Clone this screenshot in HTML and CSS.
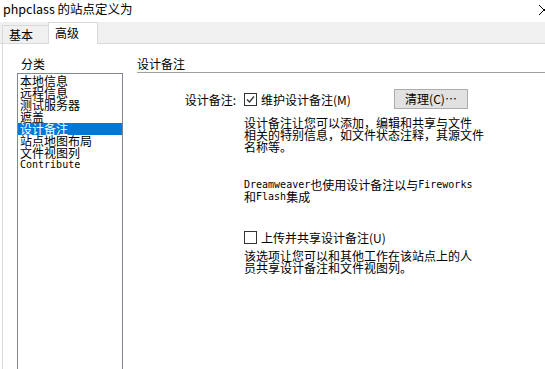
FILE: index.html
```html
<!DOCTYPE html>
<html lang="zh-CN">
<head>
    <meta charset="UTF-8">
    <title>phpclass 的站点定义为</title>
    <link rel="stylesheet" href="styles.css">
</head>
<body>
    <div class="titlebar">
        <span class="title">phpclass 的站点定义为</span>
        <svg class="close" width="12" height="12" viewBox="0 0 12 12">
            <path d="M1 1 L11 11 M11 1 L1 11" stroke="#000" stroke-width="1" fill="none"/>
        </svg>
    </div>

    <div class="tabbar">
        <div class="tab">基本</div>
        <div class="tab active">高级</div>
    </div>

    <div class="panel">
        <div class="side">
            <div class="side-label">分类</div>
            <ul class="listbox">
                <li>本地信息</li>
                <li>远程信息</li>
                <li>测试服务器</li>
                <li>遮盖</li>
                <li class="selected">设计备注</li>
                <li>站点地图布局</li>
                <li>文件视图列</li>
                <li><span class="mono">Contribute</span></li>
            </ul>
        </div>

        <div class="main">
            <div class="section-title">设计备注</div>

            <div class="row first">
                <span class="row-label">设计备注:</span>
                <label class="check">
                    <span class="box">
                        <svg width="11" height="11" viewBox="0 0 11 11">
                            <path d="M2 5.5 L4.5 8 L9 2.5" stroke="#333" stroke-width="1.3" fill="none"/>
                        </svg>
                    </span>
                    维护设计备注(M)
                </label>
                <button class="btn">清理(C)…</button>
            </div>

            <p class="note n1">设计备注让您可以添加，编辑和共享与文件<br>相关的特别信息，如文件状态注释，其源文件<br>名称等。</p>

            <p class="note n2"><span class="mono">Dreamweaver</span>也使用设计备注以与<span class="mono">Fireworks</span><br>和<span class="mono">Flash</span>集成</p>

            <div class="row second">
                <label class="check">
                    <span class="box"></span>
                    上传并共享设计备注(U)
                </label>
            </div>

            <p class="note n3">该选项让您可以和其他工作在该站点上的人<br>员共享设计备注和文件视图列。</p>
        </div>
    </div>
</body>
</html>
```

FILE: styles.css
```css
body {
    margin: 0;
    width: 545px;
    height: 369px;
    overflow: hidden;
    background: #fff;
    color: #000;
    font-family: "Noto Sans CJK SC", "Noto Sans", sans-serif;
    font-size: 12px;
}

.titlebar {
    height: 22px;
    display: flex;
    align-items: center;
    padding-left: 3px;
}

.title {
    font-size: 12.5px;
    line-height: 16px;
    margin-top: -4px;
}

.close {
    margin-left: auto;
    margin-right: -5px;
    margin-top: -3px;
}

.tabbar {
    height: 21px;
    background: #f0f0f0;
    border-bottom: 1px solid #d9d9d9;
    display: flex;
    align-items: flex-end;
    padding-left: 2px;
}

.tab {
    height: 17px;
    line-height: 18px;
    padding: 0 16px 0 6px;
    border: 1px solid #d9d9d9;
    border-bottom: none;
    background: #f0f0f0;
    font-size: 12px;
}

.tab.active {
    height: 21px;
    line-height: 19px;
    margin-bottom: -1px;
    margin-left: -2px;
    padding: 0 18px 0 6px;
    background: #fff;
}

/* panel fills the rest of the window; the list runs off the bottom edge */
.panel {
    display: flex;
    height: 313px;
    margin-left: 2px;
    border-left: 1px solid #d9d9d9;
    padding-top: 12px;
}

.side {
    width: 106px;
    margin-left: 14px;
    display: flex;
    flex-direction: column;
}

.side-label {
    height: 17px;
    line-height: 15px;
    padding-left: 4px;
}

.listbox {
    flex: 1;
    margin: 0;
    padding: 1px 0 0;
    list-style: none;
    border: 1px solid #828790;
    border-bottom: none;
}

.listbox li {
    height: 12px;
    line-height: 12px;
    padding-left: 2px;
    white-space: nowrap;
}

.listbox li.selected {
    background: #0078d7;
    color: #fff;
}

.mono {
    font-family: "DejaVu Sans Mono", "Liberation Mono", monospace;
    font-size: 10px;
    line-height: 12px;
    vertical-align: top;
}

.main {
    flex: 1;
    margin-left: 14px;
}

.section-title {
    height: 16px;
    line-height: 15px;
    border-bottom: 1px solid #a0a0a0;
}

.row {
    display: flex;
    align-items: center;
}

.row.first {
    height: 20px;
    margin-top: 16px;
}

.row.second {
    height: 14px;
    margin-top: 27px;
    padding-left: 107px;
}

.row-label {
    width: 99px;
    text-align: right;
    margin-right: 8px;
}

.check {
    display: flex;
    align-items: center;
    width: 150px;
    white-space: nowrap;
}

.box {
    width: 11px;
    height: 11px;
    border: 1px solid #333;
    background: #fff;
    margin-right: 4px;
    display: flex;
}

.btn {
    width: 74px;
    height: 20px;
    padding: 0;
    border: 1px solid #adadad;
    background: #e1e1e1;
    font-family: inherit;
    font-size: 12px;
    line-height: 16px;
    color: #000;
}

.note {
    margin: 0 0 0 107px;
    line-height: 12px;
    white-space: nowrap;
}

.n1 {
    margin-top: 8px;
}

.n2 {
    margin-top: 26px;
}

.n3 {
    margin-top: 6px;
}
```
